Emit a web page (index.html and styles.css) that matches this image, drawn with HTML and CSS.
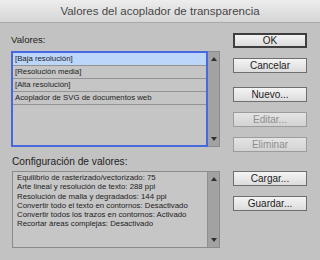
FILE: index.html
```html
<!DOCTYPE html>
<html lang="es">
<head>
    <meta charset="UTF-8">
    <meta name="viewport" content="width=device-width, initial-scale=1.0">
    <title>Valores del acoplador de transparencia</title>
    <link rel="stylesheet" href="styles.css">
</head>
<body>
    <div class="window">
        <div class="titlebar">Valores del acoplador de transparencia</div>

        <div class="content">
            <!-- Columna izquierda: lista y configuracion -->
            <div class="left">
                <div class="label">Valores:</div>
                <div class="listbox">
                    <div class="list">
                        <div class="item selected">[Baja resolución]</div>
                        <div class="item">[Resolución media]</div>
                        <div class="item">[Alta resolución]</div>
                        <div class="item">Acoplador de SVG de documentos web</div>
                    </div>
                    <div class="scrollbar">
                        <span class="arrow up"></span>
                        <span class="arrow down"></span>
                    </div>
                </div>

                <div class="label label-config">Configuración de valores:</div>
                <div class="textbox">
                    <div class="lines">
                        <div>Equilibrio de rasterizado/vectorizado: 75</div>
                        <div>Arte lineal y resolución de texto: 288 ppi</div>
                        <div>Resolución de malla y degradados: 144 ppi</div>
                        <div>Convertir todo el texto en contornos: Desactivado</div>
                        <div>Convertir todos los trazos en contornos: Activado</div>
                        <div>Recortar áreas complejas: Desactivado</div>
                    </div>
                    <div class="scrollbar">
                        <span class="arrow up"></span>
                        <span class="arrow down"></span>
                    </div>
                </div>
            </div>

            <!-- Botones -->
            <div class="buttons">
                <button class="btn default">OK</button>
                <button class="btn gap-small">Cancelar</button>
                <button class="btn gap-mid">Nuevo...</button>
                <button class="btn gap-small" disabled>Editar...</button>
                <button class="btn gap-small" disabled>Eliminar</button>
                <button class="btn gap-large">Cargar...</button>
                <button class="btn gap-small">Guardar...</button>
            </div>
        </div>
    </div>
</body>
</html>
```

FILE: styles.css
```css
body {
    margin: 0;
    font-family: "Liberation Sans", Arial, sans-serif;
    background-color: #c2c2c2;
    color: #222;
}

.window {
    width: 320px;
    height: 260px;
    overflow: hidden;
    background-color: #c2c2c2;
}

.titlebar {
    height: 22px;
    line-height: 22px;
    text-align: center;
    font-size: 11.5px;
    color: #474747;
    background: linear-gradient(#ededed, #d5d5d5);
    border-bottom: 1px solid #a9a9a9;
}

.content {
    display: flex;
    padding: 10px 13px 0 11px;
}

.left {
    width: 209px;
}

.label {
    font-size: 9.6px;
    height: 18px;
    line-height: 14px;
}

.label-config {
    font-size: 10.2px;
    margin-top: 7px;
    height: 17px;
    line-height: 16px;
    padding-left: 1px;
}

.listbox {
    display: flex;
    height: 96px;
}

.list {
    flex: 1;
    border: 2px solid #4a68de;
    background-color: #c5c5c5;
}

.item {
    height: 12px;
    line-height: 12px;
    font-size: 7.8px;
    padding-left: 2px;
    border-bottom: 1px solid #939393;
}

.item.selected {
    background-color: #bcd6fa;
}

.scrollbar {
    width: 11px;
    background-color: #a2a2a2;
    border: 1px solid #8c8c8c;
    border-left: none;
    display: flex;
    flex-direction: column;
    justify-content: space-between;
    align-items: center;
    padding: 5px 0;
}

.arrow {
    width: 0;
    height: 0;
    border-left: 3px solid transparent;
    border-right: 3px solid transparent;
}

.arrow.up {
    border-bottom: 4px solid #2f2f2f;
}

.arrow.down {
    border-top: 4px solid #2f2f2f;
}

.textbox {
    display: flex;
    height: 75px;
    margin-left: 1px;
    border: 1px solid #8a8a8a;
    background-color: #c6c6c6;
}

.textbox .scrollbar {
    border: none;
    border-left: 1px solid #909090;
}

.lines {
    flex: 1;
    padding: 1px 0 0 4px;
    font-size: 7.8px;
    line-height: 9.3px;
}

.buttons {
    margin-left: 13px;
    display: flex;
    flex-direction: column;
}

.btn {
    width: 74px;
    height: 15px;
    padding: 0;
    font-family: "Liberation Sans", Arial, sans-serif;
    font-size: 10px;
    color: #1c1c1c;
    background: linear-gradient(#f4f4f4, #dcdcdc);
    border: 1px solid #6e6e6e;
    border-radius: 0;
}

.btn.default {
    border: 2px solid #3e3e3e;
}

.btn:disabled {
    color: #8f8f8f;
    border-color: #9c9c9c;
    background: linear-gradient(#e4e4e4, #d2d2d2);
}

.gap-small {
    margin-top: 10px;
}

.gap-mid {
    margin-top: 14px;
}

.gap-large {
    margin-top: 19px;
}
```
